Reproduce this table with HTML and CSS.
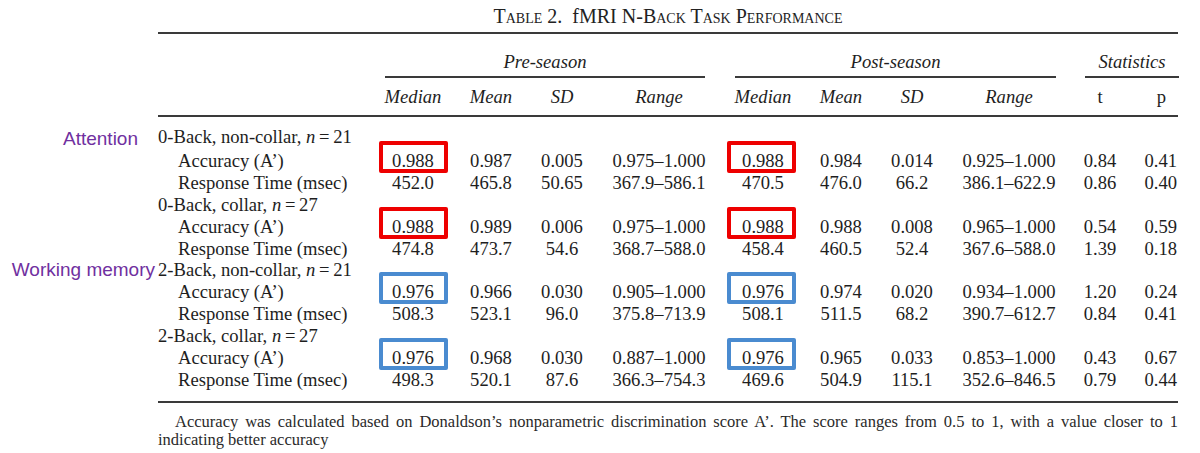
FILE: index.html
```html
<!DOCTYPE html>
<html lang="en">
<head>
<meta charset="utf-8">
<title>Table 2. fMRI N-Back Task Performance</title>
<link rel="stylesheet" href="styles.css">
</head>
<body>
<div class="page">
  <h1 class="title"><span class="sc">Table 2.</span>&nbsp; fMRI <span class="sc">N-Back Task Performance</span></h1>

  <div class="tbl">
    <div class="rule"></div>

    <div class="row head-groups">
      <div class="grp g-pre">Pre-season</div>
      <div class="grp g-post">Post-season</div>
      <div class="grp g-stat">Statistics</div>
    </div>

    <div class="row head-cols">
      <div class="ch c3">Median</div>
      <div class="ch">Mean</div>
      <div class="ch">SD</div>
      <div class="ch">Range</div>
      <div class="ch">Median</div>
      <div class="ch">Mean</div>
      <div class="ch">SD</div>
      <div class="ch">Range</div>
      <div class="ch up">t</div>
      <div class="ch up p">p</div>
    </div>

    <div class="rule"></div>

    <div class="body">
      <div class="row">
        <div class="lbl lbl-att">Attention</div>
        <div class="stub gtitle">0-Back, non-collar, <i>n</i>&#8201;=&#8201;21</div>
      </div>
      <div class="row">
        <div class="lbl"></div>
        <div class="stub sub">Accuracy (A’)</div>
        <div class="v box red">0.988</div>
        <div class="v">0.987</div>
        <div class="v">0.005</div>
        <div class="v">0.975–1.000</div>
        <div class="v box red post">0.988</div>
        <div class="v">0.984</div>
        <div class="v">0.014</div>
        <div class="v">0.925–1.000</div>
        <div class="v">0.84</div>
        <div class="v p">0.41</div>
      </div>
      <div class="row">
        <div class="lbl"></div>
        <div class="stub sub">Response Time (msec)</div>
        <div class="v">452.0</div>
        <div class="v">465.8</div>
        <div class="v">50.65</div>
        <div class="v">367.9–586.1</div>
        <div class="v">470.5</div>
        <div class="v">476.0</div>
        <div class="v">66.2</div>
        <div class="v">386.1–622.9</div>
        <div class="v">0.86</div>
        <div class="v p">0.40</div>
      </div>

      <div class="row">
        <div class="lbl"></div>
        <div class="stub gtitle">0-Back, collar, <i>n</i>&#8201;=&#8201;27</div>
      </div>
      <div class="row">
        <div class="lbl"></div>
        <div class="stub sub">Accuracy (A’)</div>
        <div class="v box red">0.988</div>
        <div class="v">0.989</div>
        <div class="v">0.006</div>
        <div class="v">0.975–1.000</div>
        <div class="v box red post">0.988</div>
        <div class="v">0.988</div>
        <div class="v">0.008</div>
        <div class="v">0.965–1.000</div>
        <div class="v">0.54</div>
        <div class="v p">0.59</div>
      </div>
      <div class="row">
        <div class="lbl"></div>
        <div class="stub sub">Response Time (msec)</div>
        <div class="v">474.8</div>
        <div class="v">473.7</div>
        <div class="v">54.6</div>
        <div class="v">368.7–588.0</div>
        <div class="v">458.4</div>
        <div class="v">460.5</div>
        <div class="v">52.4</div>
        <div class="v">367.6–588.0</div>
        <div class="v">1.39</div>
        <div class="v p">0.18</div>
      </div>

      <div class="row">
        <div class="lbl lbl-wm">Working memory</div>
        <div class="stub gtitle">2-Back, non-collar, <i>n</i>&#8201;=&#8201;21</div>
      </div>
      <div class="row">
        <div class="lbl"></div>
        <div class="stub sub">Accuracy (A’)</div>
        <div class="v box blue">0.976</div>
        <div class="v">0.966</div>
        <div class="v">0.030</div>
        <div class="v">0.905–1.000</div>
        <div class="v box blue post">0.976</div>
        <div class="v">0.974</div>
        <div class="v">0.020</div>
        <div class="v">0.934–1.000</div>
        <div class="v">1.20</div>
        <div class="v p">0.24</div>
      </div>
      <div class="row">
        <div class="lbl"></div>
        <div class="stub sub">Response Time (msec)</div>
        <div class="v">508.3</div>
        <div class="v">523.1</div>
        <div class="v">96.0</div>
        <div class="v">375.8–713.9</div>
        <div class="v">508.1</div>
        <div class="v">511.5</div>
        <div class="v">68.2</div>
        <div class="v">390.7–612.7</div>
        <div class="v">0.84</div>
        <div class="v p">0.41</div>
      </div>

      <div class="row">
        <div class="lbl"></div>
        <div class="stub gtitle">2-Back, collar, <i>n</i>&#8201;=&#8201;27</div>
      </div>
      <div class="row">
        <div class="lbl"></div>
        <div class="stub sub">Accuracy (A’)</div>
        <div class="v box blue">0.976</div>
        <div class="v">0.968</div>
        <div class="v">0.030</div>
        <div class="v">0.887–1.000</div>
        <div class="v box blue post">0.976</div>
        <div class="v">0.965</div>
        <div class="v">0.033</div>
        <div class="v">0.853–1.000</div>
        <div class="v">0.43</div>
        <div class="v p">0.67</div>
      </div>
      <div class="row">
        <div class="lbl"></div>
        <div class="stub sub">Response Time (msec)</div>
        <div class="v">498.3</div>
        <div class="v">520.1</div>
        <div class="v">87.6</div>
        <div class="v">366.3–754.3</div>
        <div class="v">469.6</div>
        <div class="v">504.9</div>
        <div class="v">115.1</div>
        <div class="v">352.6–846.5</div>
        <div class="v">0.79</div>
        <div class="v p">0.44</div>
      </div>
    </div>

    <div class="rule"></div>
  </div>

  <p class="note">Accuracy was calculated based on Donaldson’s nonparametric discrimination score A’. The score ranges from 0.5 to 1, with a value closer to 1 indicating better accuracy</p>
</div>
</body>
</html>
```

FILE: styles.css
```css
* { box-sizing: border-box; }

html, body {
  margin: 0;
  padding: 0;
  background: #ffffff;
}

body {
  font-family: "Liberation Serif", "Times New Roman", serif;
  color: #1e1e1e;
}

.page {
  width: 1200px;
  height: 453px;
  overflow: hidden;
}

.title {
  margin: 0 0 0 158px;
  width: 1020px;
  padding-top: 5px;
  font-size: 20px;
  line-height: 22px;
  font-weight: normal;
  text-align: center;
  color: #222;
}

.sc { font-variant: small-caps; }

.tbl {
  --cols: 158px 216px 78px 78px 64px 130px 78px 78px 64px 130px 52px 52px;
  margin-top: 5px;
  font-size: 18.6px;
}

.rule {
  margin-left: 158px;
  width: 1020px;
  height: 2px;
  background: #3a3a3a;
}

.row {
  display: grid;
  grid-template-columns: var(--cols);
  line-height: 21.9px;
}

/* group header row */
.head-groups .grp {
  font-style: italic;
  text-align: center;
  padding-top: 17px;
  padding-bottom: 3px;
  border-bottom: 2px solid #3a3a3a;
  line-height: 22px;
}
.g-pre  { grid-column: 3 / 7;  margin: 0 19px 0 11px; }
.g-post { grid-column: 7 / 11; margin: 0 18px 0 11px; }
.g-stat { grid-column: 11 / 13; margin: 0 -1px 0 11px; }

/* column header row */
.head-cols .ch {
  font-style: italic;
  text-align: center;
  padding-top: 8px;
  padding-bottom: 7px;
  line-height: 22px;
}
.head-cols .c3 { grid-column: 3; }
.head-cols .up { font-style: normal; }
.head-cols .ch.p { text-align: right; padding-right: 12px; }

.body {
  padding-top: 9px;
  padding-bottom: 10px;
}

.lbl {
  font-family: "Liberation Sans", Arial, sans-serif;
  font-size: 19px;
  color: #7030a0;
  text-align: right;
  white-space: nowrap;
}
.lbl-att { padding-right: 20px; padding-top: 2px; }
.lbl-wm  { padding-right: 3px; }

.stub { white-space: nowrap; }
.gtitle { grid-column: 2 / -1; }
.sub { padding-left: 20px; }

.v {
  text-align: center;
  white-space: nowrap;
}
.v.p { text-align: right; padding-right: 1px; }

.box { position: relative; }
.box::after {
  content: "";
  position: absolute;
  top: -9px;
  bottom: -1px;
  left: 5px;
  right: 4px;
  border: 4px solid;
  border-radius: 2px;
}
.box.post::after { left: 3px; right: 6px; }
.box.red::after  { border-color: #ee0000; }
.box.blue::after { border-color: #4a8bd0; }

.note {
  margin: 10px 0 0 158px;
  width: 1020px;
  font-size: 16.5px;
  line-height: 18px;
  text-align: justify;
  text-indent: 17px;
  color: #2a2a2a;
}
```
